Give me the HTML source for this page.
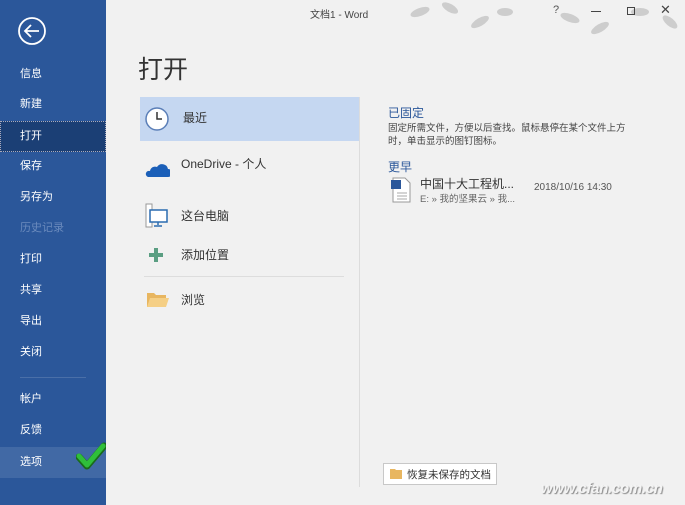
<!DOCTYPE html>
<html><head><meta charset="utf-8"><style>
*{margin:0;padding:0;box-sizing:border-box}
body{width:685px;height:505px;overflow:hidden;background:#f1f1f1;font-family:"Liberation Sans","Noto Sans CJK SC",sans-serif;position:relative;color:#444}
.sb{position:absolute;left:0;top:0;width:106px;height:505px;background:#2b579a}
.sb div.i{position:absolute;left:20px;font-size:11px;color:#fff;height:30px;line-height:30px}
.sel{position:absolute;left:0;top:121px;width:106px;height:31px;background:#1b3f75;border:1px dotted #aab}
.opt{position:absolute;left:0;top:447px;width:106px;height:31px;background:#4169a5}
.a{position:absolute}
</style></head><body>
<div class="sb">
<svg class="a" style="left:17px;top:16px" width="30" height="30"><circle cx="15" cy="15" r="13" fill="none" stroke="#fff" stroke-width="1.8"/><path d="M8 15h14M14 9l-6 6 6 6" fill="none" stroke="#fff" stroke-width="1.8"/></svg>
<div class="sel"></div><div class="opt"></div>
<div class="i" style="top:59px">信息</div>
<div class="i" style="top:89px">新建</div>
<div class="i" style="top:121px">打开</div>
<div class="i" style="top:151px">保存</div>
<div class="i" style="top:182px">另存为</div>
<div class="i" style="top:213px;color:#6b8bbd">历史记录</div>
<div class="i" style="top:244px">打印</div>
<div class="i" style="top:275px">共享</div>
<div class="i" style="top:306px">导出</div>
<div class="i" style="top:337px">关闭</div>
<div class="a" style="left:20px;top:377px;width:66px;height:1px;background:#4a6fa8"></div>
<div class="i" style="top:384px">帐户</div>
<div class="i" style="top:415px">反馈</div>
<div class="i" style="top:447px">选项</div>
<svg class="a" style="left:76px;top:442px" width="30" height="28"><path d="M3 15l8 9L28 4" fill="none" stroke="#1a6b1a" stroke-width="7" stroke-linecap="round" stroke-linejoin="round"/><path d="M3 14l8 9L27 4" fill="none" stroke="#2fbf3a" stroke-width="5" stroke-linecap="round" stroke-linejoin="round"/></svg>
</div>
<svg class="a" style="left:390px;top:0" width="295" height="38" opacity=".5"><g fill="#aaa"><ellipse cx="30" cy="12" rx="10" ry="4" transform="rotate(-20 30 12)"/><ellipse cx="60" cy="8" rx="9" ry="4" transform="rotate(30 60 8)"/><ellipse cx="90" cy="22" rx="10" ry="4" transform="rotate(-30 90 22)"/><ellipse cx="115" cy="12" rx="8" ry="4"/><ellipse cx="180" cy="18" rx="10" ry="4" transform="rotate(20 180 18)"/><ellipse cx="210" cy="28" rx="10" ry="4" transform="rotate(-30 210 28)"/><ellipse cx="250" cy="12" rx="9" ry="4"/><ellipse cx="280" cy="22" rx="9" ry="4" transform="rotate(40 280 22)"/></g></svg>
<div class="a" style="left:310px;top:6px;font-size:10px;color:#444">文档1 - Word</div>
<div class="a" style="left:553px;top:4px;font-size:11px;color:#555">?</div>
<div class="a" style="left:591px;top:11px;width:10px;height:1px;background:#444"></div>
<div class="a" style="left:627px;top:7px;width:8px;height:8px;border:1px solid #444"></div>
<div class="a" style="left:660px;top:2px;font-size:13px;color:#444">✕</div>
<div class="a" style="left:138px;top:50px;font-size:25px;color:#333">打开</div>
<div class="a" style="left:140px;top:97px;width:219px;height:44px;background:#c5d7f1"></div>
<div class="a" style="left:359px;top:97px;width:1px;height:390px;background:#dcdcdc"></div>
<svg class="a" style="left:144px;top:106px" width="26" height="26"><circle cx="13" cy="13" r="11" fill="#fff" stroke="#5b7fb8" stroke-width="1.5"/><path d="M13 6v7h5" fill="none" stroke="#333" stroke-width="1.5"/></svg>
<div class="a" style="left:183px;top:109px;font-size:12px;color:#333">最近</div>
<svg class="a" style="left:144px;top:160px" width="26" height="18"><path d="M4 17h20a4 4 0 0 0 0-8 6 6 0 0 0-11-2 5 5 0 0 0-7 4 3 3 0 0 0-2 6z" fill="#1b5fb8"/></svg>
<div class="a" style="left:181px;top:155px;font-size:12px;color:#333">OneDrive - 个人</div>
<svg class="a" style="left:145px;top:203px" width="24" height="26"><rect x="1" y="1" width="6" height="23" fill="#fff" stroke="#999"/><rect x="5" y="7" width="17" height="12" fill="#fff" stroke="#2b6cb0" stroke-width="1.5"/><path d="M13 19v3M9 23h8" stroke="#2b6cb0" stroke-width="1.5"/></svg>
<div class="a" style="left:181px;top:207px;font-size:12px;color:#333">这台电脑</div>
<svg class="a" style="left:148px;top:247px" width="16" height="16"><path d="M6 1h4v5h5v4h-5v5H6v-5H1V6h5z" fill="#5a9e82"/></svg>
<div class="a" style="left:181px;top:246px;font-size:12px;color:#333">添加位置</div>
<div class="a" style="left:144px;top:276px;width:200px;height:1px;background:#ddd"></div>
<svg class="a" style="left:146px;top:290px" width="24" height="18"><path d="M1 3h7l2 2h10v12H1z" fill="#e8b660"/><path d="M1 17l3-9h19l-3 9z" fill="#f5cf85"/></svg>
<div class="a" style="left:181px;top:291px;font-size:12px;color:#333">浏览</div>
<div class="a" style="left:388px;top:104px;font-size:12px;color:#2b579a">已固定</div>
<div class="a" style="left:388px;top:122px;font-size:9.5px;line-height:13px;color:#444;width:250px">固定所需文件，方便以后查找。鼠标悬停在某个文件上方时，单击显示的图钉图标。</div>
<div class="a" style="left:388px;top:158px;font-size:12px;color:#2b579a">更早</div>
<svg class="a" style="left:390px;top:177px" width="22" height="26"><path d="M3 1h12l5 5v19H3z" fill="#fff" stroke="#999"/><rect x="1" y="3" width="10" height="9" fill="#2b579a"/><path d="M7 16h10M7 19h10M7 22h10" stroke="#aaa"/></svg>
<div class="a" style="left:420px;top:175px;font-size:12px;color:#333">中国十大工程机...</div>
<div class="a" style="left:420px;top:191px;font-size:9.5px;color:#666">E: » 我的坚果云 » 我...</div>
<div class="a" style="left:534px;top:182px;font-size:10px;color:#555">2018/10/16 14:30</div>
<div class="a" style="left:383px;top:463px;width:114px;height:22px;background:#fff;border:1px solid #c8c8c8"></div>
<svg class="a" style="left:390px;top:468px" width="13" height="11"><path d="M0 1h5l1 1h6v9H0z" fill="#e8b660"/></svg>
<div class="a" style="left:407px;top:467px;font-size:10.5px;color:#333">恢复未保存的文档</div>
<div class="a" style="left:541px;top:480px;font-size:15px;font-style:italic;font-weight:bold;color:#f4f4f4;letter-spacing:-0.3px;text-shadow:1px 1px 1px #888">www.cfan.com.cn</div>
</body></html>
